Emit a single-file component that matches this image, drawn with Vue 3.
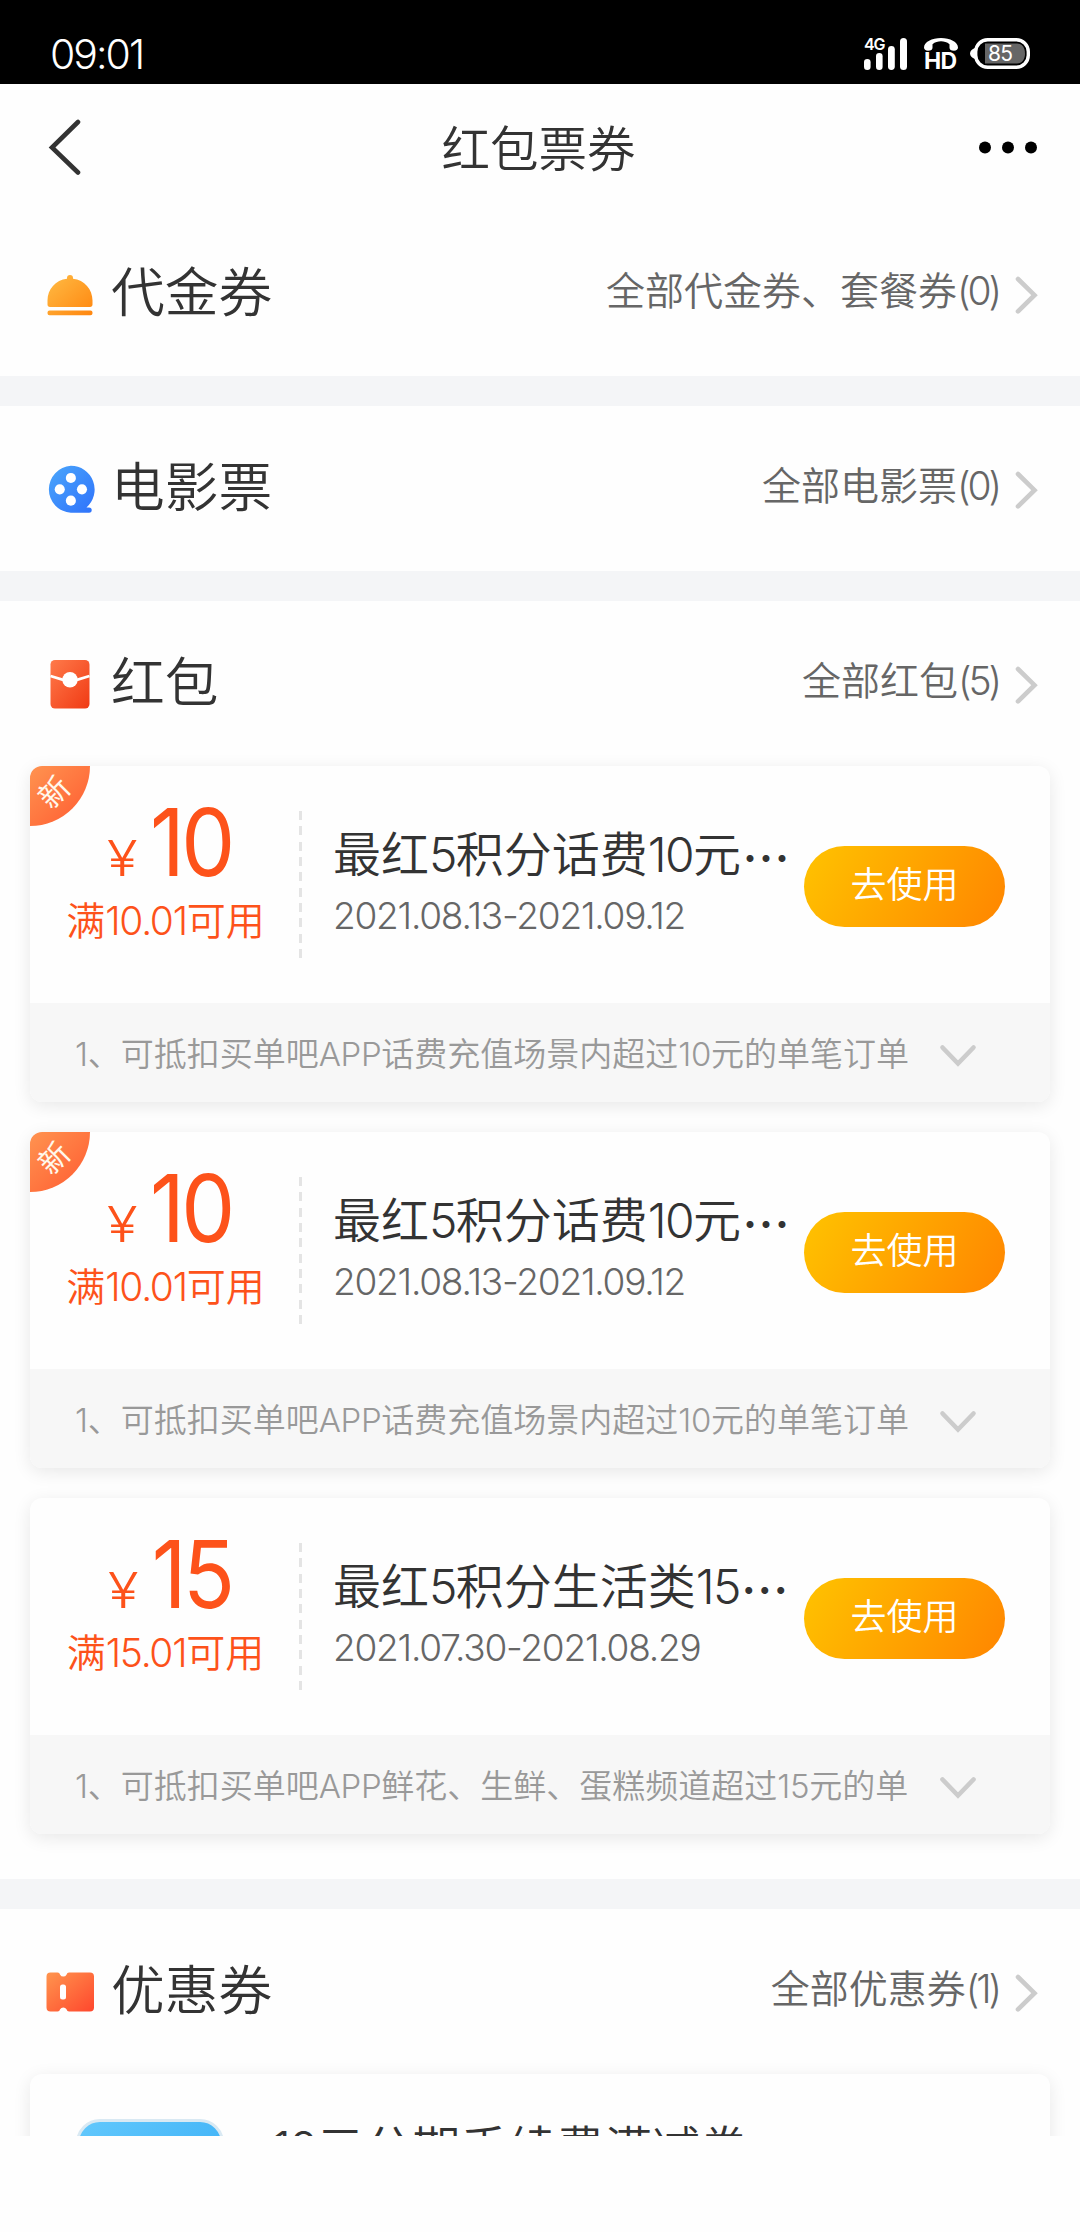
<script setup>
import { h } from 'vue'

// Splits a string so that Latin runs can carry their own tracking.
const Mixed = (props) =>
  h(
    'span',
    { class: 'mixed' },
    props.text
      .split(/([\x21-\x7e]+)/)
      .filter(Boolean)
      .map((part) => h('span', { class: /^[\x21-\x7e]/.test(part) ? 'latin' : 'han' }, part))
  )
Mixed.props = ['text']

const sections = [
  { id: 'voucher', title: '代金券', link: '全部代金券、套餐券(0)' },
  { id: 'movie', title: '电影票', link: '全部电影票(0)' },
  {
    id: 'packet',
    title: '红包',
    link: '全部红包(5)',
    coupons: [
      { isNew: true, amount: '10', cond: '满10.01可用', title: '最红5积分话费10元', date: '2021.08.13-2021.09.12', note: '1、可抵扣买单吧APP话费充值场景内超过10元的单笔订单' },
      { isNew: true, amount: '10', cond: '满10.01可用', title: '最红5积分话费10元', date: '2021.08.13-2021.09.12', note: '1、可抵扣买单吧APP话费充值场景内超过10元的单笔订单' },
      { isNew: false, amount: '15', cond: '满15.01可用', title: '最红5积分生活类15', date: '2021.07.30-2021.08.29', note: '1、可抵扣买单吧APP鲜花、生鲜、蛋糕频道超过15元的单' }
    ]
  },
  { id: 'ticket', title: '优惠券', link: '全部优惠券(1)', offer: '10元分期手续费满减券' }
]
</script>

<template>
  <div class="phone">
    <header class="status">
      <span class="clock">09:01</span>
      <div class="status-icons">
        <div class="signal">
          <span class="net">4G</span>
          <svg width="43" height="32" viewBox="0 0 43 32" fill="#fff">
            <rect x="0" y="21" width="6.6" height="11" rx="3.3" />
            <rect x="12" y="15" width="6.6" height="17" rx="3.3" />
            <rect x="24" y="8" width="6.8" height="24" rx="3.4" />
            <rect x="36" y="0" width="7" height="32" rx="3.5" />
          </svg>
        </div>
        <div class="volte">
          <svg width="34" height="13" viewBox="0 0 34 13" fill="#fff">
            <path d="M0 9.5C0 4 8 0 17 0s17 4 17 9.500c0 2-1.500 3.200-4 3.200-3 0-4.500-1-4.500-3V6.200C23 4.200 20 3.300 17 3.300s-6 .9-8.500 2.900v3.500c0 2-1.500 3-4.500 3-2.500 0-4-1.200-4-3.200z" />
          </svg>
          <span class="hd">HD</span>
        </div>
        <div class="battery">
          <svg width="60" height="31" viewBox="0 0 60 31">
            <path d="M5 10C2 11 0 13 0 15.500S2 20 5 21z" fill="#fff" />
            <rect x="5.700" y="1.700" width="52.600" height="27.600" rx="12" fill="#000" stroke="#fff" stroke-width="3.400" />
            <path d="M15 5.500h32c5 0 8 4 8 10s-3 10-8 10H15z" fill="#666" />
          </svg>
          <span class="level">85</span>
        </div>
      </div>
    </header>

    <nav class="nav">
      <svg class="back" width="34" height="58" viewBox="0 0 34 58" fill="none" stroke="#333" stroke-width="4.600" stroke-linecap="round" stroke-linejoin="miter">
        <path d="M31 3L5 28.500l26 25" />
      </svg>
      <h1>红包票券</h1>
      <svg class="more" width="60" height="14" viewBox="0 0 60 14">
        <circle cx="7" cy="6.500" r="6" /><circle cx="30" cy="6.500" r="6" /><circle cx="53" cy="6.500" r="6" />
      </svg>
    </nav>

    <main class="content">
      <section v-for="s in sections" :key="s.id" class="section" :class="{ filled: s.coupons }">
        <div class="head">
          <svg class="icon" width="50" height="50" viewBox="0 0 50 50">
            <defs>
              <linearGradient id="gOrange" x1="0" y1="0" x2="1" y2="1"><stop offset="0" stop-color="#ffbc45" /><stop offset="1" stop-color="#ff860f" /></linearGradient>
              <linearGradient id="gBlue" x1="0" y1="0" x2="1" y2="1"><stop offset="0" stop-color="#4aa6fb" /><stop offset="1" stop-color="#2f72fb" /></linearGradient>
              <linearGradient id="gRed" x1="0" y1="0" x2="1" y2="1"><stop offset="0" stop-color="#ff7a4a" /><stop offset="1" stop-color="#f03a14" /></linearGradient>
              <linearGradient id="gCoral" x1="0" y1="0" x2="1" y2="1"><stop offset="0" stop-color="#ff954e" /><stop offset="1" stop-color="#ff472d" /></linearGradient>
            </defs>
            <path v-if="s.id === 'voucher'" fill="url(#gOrange)" d="M22 9.800V9a3 3 0 0 1 6 0v.8C39.500 11 47.500 20.500 47.500 31.500v4c0 1.500-.9 2.500-2.500 2.500H5c-1.600 0-2.500-1-2.500-2.500v-4C2.500 20.500 10.500 11 22 9.800zM4.500 41.500h41a2 2 0 0 1 2 2v.7a2 2 0 0 1-2 2h-41a2 2 0 0 1-2-2v-.7a2 2 0 0 1 2-2z" />
            <g v-else-if="s.id === 'movie'" transform="translate(-.4 -.2) scale(1.01)">
              <path fill="url(#gBlue)" d="M26 2a23.500 23.500 0 0 1 15.500 41.200H44a2.600 2.600 0 0 1 0 5.300H26A23.300 23.300 0 0 1 26 2z" />
              <g fill="#fff"><circle cx="26" cy="14" r="5" /><circle cx="15" cy="25.300" r="5" /><circle cx="37" cy="25.300" r="5" /><circle cx="26" cy="36.500" r="5" /></g>
            </g>
            <template v-else-if="s.id === 'packet'">
              <rect x="5.500" y="1" width="39" height="48.500" rx="4.500" fill="url(#gRed)" />
              <path d="M5.500 17L18 20.800h14L44.500 17" fill="none" stroke="#fff" stroke-width="2.800" />
              <circle cx="25" cy="20.700" r="7.700" fill="#fff" />
            </template>
            <template v-else>
              <path fill="url(#gCoral)" d="M5.500 5.500h7c1.500 0 2 .8 2.600 2.200a3.700 3.700 0 0 0 6.400 0c.6-1.400 1.200-2.200 2.600-2.200H45a4 4 0 0 1 4 4v31a4 4 0 0 1-4 4H24.100c-1.400 0-2-.8-2.600-2.200a3.700 3.700 0 0 0-6.400 0c-.6 1.400-1.100 2.200-2.600 2.200h-7a4 4 0 0 1-4-4v-31a4 4 0 0 1 4-4z" />
              <rect x="15" y="17.500" width="6" height="15" rx="2.500" fill="#fff" />
            </template>
          </svg>
          <h2>{{ s.title }}</h2>
          <Mixed class="link" :text="s.link" />
          <svg class="go" width="24" height="40" viewBox="0 0 24 40" fill="none" stroke="#ccc" stroke-width="4.600" stroke-linecap="round">
            <path d="M4 4l16.500 16.200L4 36.400" />
          </svg>
        </div>

        <div v-if="s.coupons" class="coupons">
          <article v-for="(c, i) in s.coupons" :key="i" class="card">
            <div v-if="c.isNew" class="badge"><span>新</span></div>
            <div class="card-main">
              <div class="value">
                <div class="price"><span class="yen">¥</span><span class="amount">{{ c.amount }}</span></div>
                <Mixed class="cond" :text="c.cond" />
              </div>
              <div class="divider"></div>
              <div class="info">
                <div class="title"><Mixed :text="c.title" /><span class="dots">…</span></div>
                <Mixed class="date" :text="c.date" />
              </div>
              <button class="use">去使用</button>
            </div>
            <div class="note">
              <Mixed :text="c.note" />
              <svg class="down" width="40" height="26" viewBox="0 0 40 26" fill="none" stroke="#ccc" stroke-width="4.600" stroke-linecap="round">
                <path d="M4.500 4.500L20 20.500 35.500 4.500" />
              </svg>
            </div>
          </article>
        </div>

        <article v-if="s.offer" class="card offer">
          <div class="thumb"></div>
          <Mixed class="offer-title" :text="s.offer" />
        </article>
      </section>
    </main>
    <footer class="bottom"></footer>
  </div>
</template>

<style>
body { margin: 0; background: #fefefe; }
</style>

<style scoped>
.phone {
  width: 1080px;
  height: 2232px;
  display: flex;
  flex-direction: column;
  overflow: hidden;
  background: #fefefe;
  color: #333;
  font-family: Inter, "Noto Sans CJK SC", sans-serif;
  font-weight: 300;
}
h1, h2 { margin: 0; font-weight: 350; }
svg { display: block; flex: none; }
.phone :deep(.mixed) { white-space: nowrap; }
.phone :deep(.han) { font-weight: 350; }
.phone :deep(.latin) { letter-spacing: -0.045em; }

.status {
  flex: none;
  box-sizing: border-box;
  height: 84px;
  padding: 24px 50px 0 50px;
  display: flex;
  justify-content: space-between;
  background: #000;
  color: #fff;
}
.clock { font-size: 41px; line-height: 60px; letter-spacing: -2px; }
.status-icons { display: flex; align-items: flex-start; padding-top: 14px; }
.signal { position: relative; width: 43px; }
.net { position: absolute; left: 0; top: -2px; font-size: 16px; line-height: 16px; font-weight: 600; letter-spacing: -1.2px; }
.volte { width: 34px; margin-left: 17px; }
.hd { display: block; font-size: 23px; line-height: 20px; font-weight: 650; letter-spacing: -0.8px; }
.battery { position: relative; margin-left: 12px; }
.level { position: absolute; left: 18px; top: 5px; font-size: 21px; line-height: 21px; font-weight: 400; letter-spacing: -0.8px; }

.nav {
  flex: none;
  box-sizing: border-box;
  height: 127px;
  padding: 0 42px 0 47px;
  display: flex;
  align-items: center;
  justify-content: space-between;
}
.nav h1 { font-size: 48.500px; line-height: 60px; margin: 4px 0 0 18px; }

.content { flex: none; height: 1925px; overflow: hidden; }
.section + .section { border-top: 30px solid #f4f5f7; }
.section.filled { padding-bottom: 45px; }
.head {
  box-sizing: border-box;
  height: 165px;
  padding: 0 42px 0 45px;
  display: flex;
  align-items: center;
}
.head h2 { margin: -2px 0 0 16px; font-size: 53.700px; line-height: 60px; }
.link { margin: -5px 0 0 auto; font-size: 39px; line-height: 50px; color: #666; }
.link :deep(.latin) { letter-spacing: -0.08em; }
.go { margin: 2px 0 0 15px; }

.coupons { display: flex; flex-direction: column; gap: 30px; }
.card {
  position: relative;
  margin: 0 30px;
  border-radius: 12px;
  background: #fefefe;
  box-shadow: 0 4px 18px rgba(0, 0, 0, 0.09);
}
.badge {
  position: absolute;
  left: 0;
  top: 0;
  width: 60px;
  height: 60px;
  display: flex;
  border-radius: 12px 0 60px 0;
  background: linear-gradient(135deg, #ff9350, #ff5a30);
  color: #fff8ec;
}
.badge span { width: 48px; height: 52px; line-height: 52px; text-align: center; font-size: 30px; font-weight: 400; transform: rotate(-45deg); }
.card-main { height: 237px; display: flex; }
.value { width: 269px; display: flex; flex-direction: column; align-items: center; color: #fd521a; }
.price { display: flex; align-items: baseline; height: 120px; padding-left: 12px; margin-top: 16px; }
.yen { font-size: 49px; line-height: 120px; transform: scaleX(1.15); }
.amount { margin-left: 7px; font-size: 94px; line-height: 120px; font-weight: 400; letter-spacing: -4px; transform: scaleX(0.91); transform-origin: 100% 50%; }
.cond { font-size: 39px; line-height: 50px; margin: -6px 0 0 2px; }
.cond :deep(.latin) { letter-spacing: -0.033em; }
.divider { width: 3px; height: 147px; margin-top: 45px; background: repeating-linear-gradient(#e4e4e4 0 9px, transparent 9px 15.330px); }
.info { width: 471px; padding: 59px 0 0 31px; display: flex; flex-direction: column; }
.title { display: flex; font-size: 48px; line-height: 60px; white-space: nowrap; }
.title :deep(.latin) { letter-spacing: -0.036em; }
.dots { font-family: "Noto Sans CJK SC", sans-serif; font-weight: 500; margin-left: 1px; }
.date { font-size: 37px; line-height: 50px; margin-top: 6px; color: #666; }
.date :deep(.latin) { letter-spacing: -0.033em; }
.use {
  width: 201px;
  height: 81px;
  margin: 80px 0 0;
  padding: 0 0 2px;
  border: 0;
  border-radius: 41px;
  background: linear-gradient(120deg, #ffc300, #ff8500);
  color: #fff;
  font: 350 36px/79px Inter, "Noto Sans CJK SC", sans-serif;
}
.note {
  height: 97px;
  padding: 2px 72px 0 45px;
  display: flex;
  align-items: center;
  justify-content: space-between;
  border-radius: 0 0 12px 12px;
  background: #f7f7f7;
  color: #999;
  font-size: 33px;
  line-height: 48px;
}
.note :deep(.latin) { letter-spacing: -0.01em; }
.down { margin-top: 4px; }

.offer { height: 200px; padding: 45px 46px; display: flex; box-sizing: border-box; }
.thumb { box-sizing: border-box; width: 148px; height: 148px; border: 3px solid #d9e9f3; border-radius: 24px; background: linear-gradient(135deg, #62c8fc, #2fa8f4); }
.offer-title { margin-left: 48px; font-size: 48px; line-height: 60px; }
.bottom { flex: none; height: 96px; background: #fefefe; }
</style>
